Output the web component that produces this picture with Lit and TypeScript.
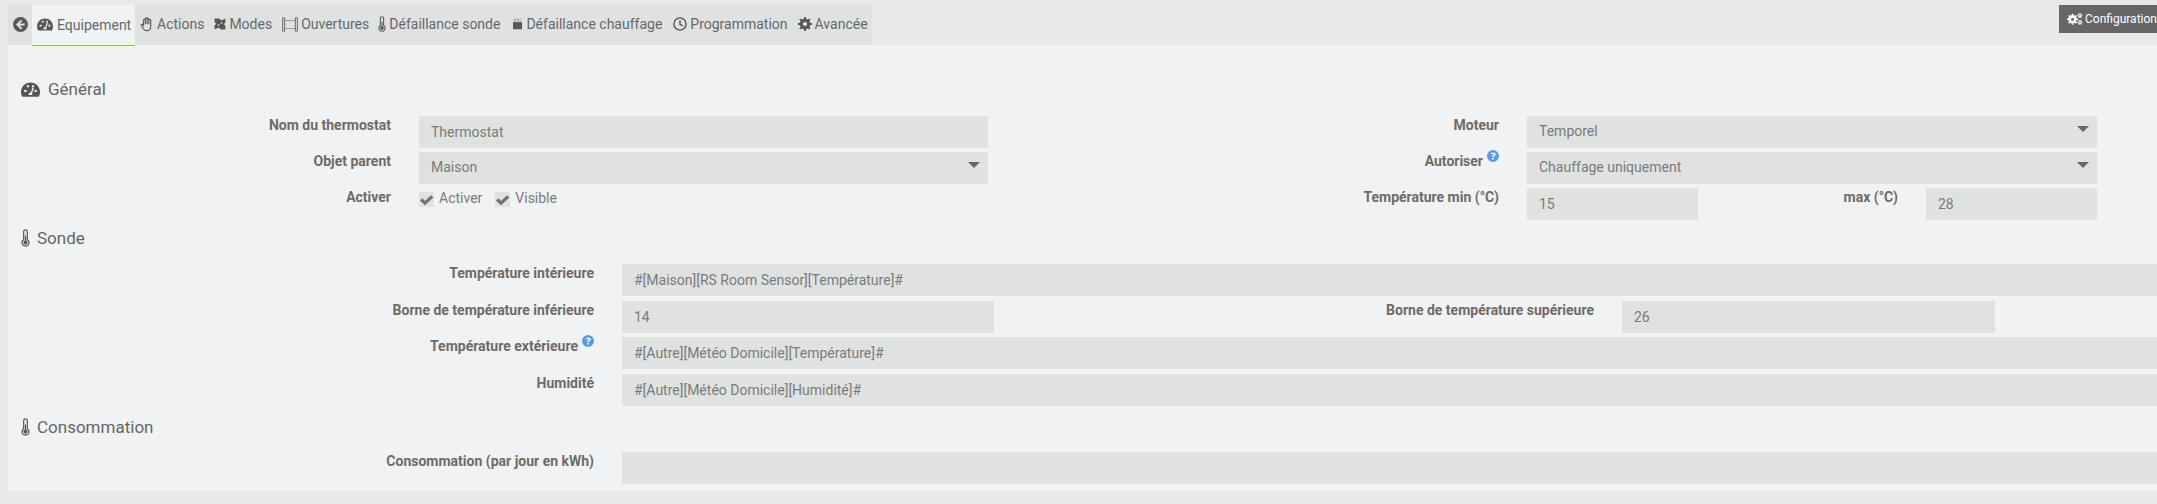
import { LitElement, html, css, svg } from "lit";
import { customElement } from "lit/decorators.js";

const ic = (vb: string, body: unknown, cls = "") =>
  html`<svg class="ic ${cls}" viewBox="${vb}" aria-hidden="true">${body}</svg>`;

/* Builds a toothed wheel with a round hole, as one path. */
function gear(cx: number, cy: number, R: number, r: number, hole: number, n = 8): string {
  const pt = (rad: number, a: number) =>
    `${(cx + rad * Math.cos(a)).toFixed(2)} ${(cy + rad * Math.sin(a)).toFixed(2)}`;
  const step = (Math.PI * 2) / n;
  let d = "";
  for (let i = 0; i < n; i++) {
    const a = i * step;
    d += `${i ? "L" : "M"}${pt(r, a - step * 0.3)}L${pt(R, a - step * 0.17)}L${pt(R, a + step * 0.17)}L${pt(r, a + step * 0.3)}`;
  }
  d += `ZM${cx - hole} ${cy}a${hole} ${hole} 0 1 0 ${hole * 2} 0a${hole} ${hole} 0 1 0 ${-hole * 2} 0Z`;
  return d;
}

const gauge = () =>
  ic("0 0 24 18", svg`<path fill-rule="evenodd" d="M12 0C5.400 0 0 5.300 0 12c0 2.300.6 4.300 1.700 6h20.600c1.100-1.700 1.700-3.700 1.700-6 0-6.700-5.400-12-12-12ZM4 9.500h3v2.500H4ZM7 4.500l2-1.500 1.600 2.200-2 1.500ZM17 4.500l-2-1.500-1.600 2.200 2 1.500ZM17 9.500h3v2.500h-3ZM14.500 6.500l1.800.8-2.400 6.500c.5.700.6 1.400.5 2.200H9.600c-.3-1.800 1.100-3.400 2.900-3.300Z"/>`, "w-gauge");

const thermo = (cls = "") =>
  ic("0 0 10 22", svg`<path fill="none" stroke="currentColor" stroke-width="1.500" d="M2.800 13V3.200a2.200 2.200 0 0 1 4.400 0V13a4.300 4.300 0 1 1-4.400 0Z"/><circle cx="5" cy="16.600" r="2.500"/><rect x="4.300" y="8" width="1.400" height="8"/>`, cls);

const hand = ic("0 0 20 22", svg`<path fill="none" stroke="currentColor" stroke-width="1.600" stroke-linejoin="round" stroke-linecap="round" d="M5 11V4.500a1.300 1.300 0 0 1 2.600 0V10M7.600 9.500V2.600a1.300 1.300 0 0 1 2.600 0V10M10.200 9.500V3.200a1.300 1.300 0 0 1 2.600 0V10M12.800 10V5a1.300 1.300 0 0 1 2.600 0v9c0 3.500-2 6-5 6H9c-2 0-3-1-4-2.500L1.600 12.500c-.8-1.400 1.200-2.700 2.200-1.400L5 13"/>`, "w-hand");

const modes = ic("0 0 20 20", svg`<path fill-rule="evenodd" d="M1 1h8l3 3 7-3v7l-3 2 3 3v6h-8l-3-3-7 3v-7l3-2-3-3ZM12 7l-1 2 2 1 1-3ZM8 13l1-2-2-1-1 3Z"/>`, "w-modes");

const film = ic("0 0 24 22", svg`<g fill="none" stroke="currentColor"><path stroke-width="1.200" opacity=".65" d="M4 5h16M4 17h16"/><path stroke-width="1.300" d="M1 1h3v20H1ZM20 1h3v20h-3Z"/></g>`, "w-film");

const heater = ic("0 0 14 16", svg`<path d="M1 5.500h12V15H1z"/><path opacity=".55" d="M2 1h1v3.500H2zM4 1h1v3.500H4zM6 1h1v3.500H6zM8 1h1v3.500H8zM10 1h1v3.500h-1z"/>`, "w-heat");

const clock = ic("0 0 20 20", svg`<circle cx="10" cy="10" r="8.700" fill="none" stroke="currentColor" stroke-width="2"/><path d="M10 4.500v6l4 2.200" fill="none" stroke="currentColor" stroke-width="2"/>`, "w-clock");

const cog = ic("0 0 20 20", svg`<path fill-rule="evenodd" d="${gear(10, 10, 10, 7.4, 3)}"/>`, "w-cog");

const cogs = ic("0 0 26 19", svg`<path fill-rule="evenodd" d="${gear(9, 10, 9, 6.700, 2.500)}"/><path fill-rule="evenodd" d="${gear(21, 4, 4, 3, 1.300, 6)}"/><path fill-rule="evenodd" d="${gear(21, 15, 4, 3, 1.300, 6)}"/>`, "w-cogs");

const back = ic("0 0 20 20", svg`<path fill-rule="evenodd" d="M10 0a10 10 0 1 0 0 20 10 10 0 0 0 0-20Zm.500 3.500 1.800 1.800L9 8.600h6.500v2.800H9l3.300 3.300-1.800 1.800L4 10Z"/>`, "w-back");

const help = html`<svg class="help" viewBox="0 0 20 20" aria-hidden="true"><path fill-rule="evenodd" d="M10 0a10 10 0 1 0 0 20 10 10 0 0 0 0-20Zm1.600 15.800H8.400v-2.600h3.200ZM14 9c-.5.800-1.200 1.200-1.800 1.600-.5.300-.7.500-.7 1.400H8.600c0-2 .8-2.700 1.600-3.200.6-.4 1.100-.6 1.100-1.200 0-.6-.6-1-1.300-1-.8 0-1.300.5-1.700 1.100L6.200 6.300C7 5 8.300 4 10.200 4c2.500 0 4.500 1.500 4.500 3.500 0 .6-.3 1-.7 1.500Z"/></svg>`;

const check = html`<span class="box"><svg viewBox="0 0 15 15" aria-hidden="true"><path d="M1 8.500 3.300 6.300 6 9l6-5.700L14.300 5.600 6 13.300Z"/></svg></span>`;

@customElement("app-root")
export class AppRoot extends LitElement {
  static styles = css`
    :host { display: block; width: 2157px; height: 504px; overflow: hidden; background: #e7e8ea; font-family: Roboto, "Liberation Sans", sans-serif; font-size: 14px; color: #6f6f6f; }
    .top { display: flex; justify-content: space-between; align-items: flex-start; padding: 5px 0 0 8px; height: 45px; box-sizing: border-box; position: relative; z-index: 1; }
    .tabs { display: flex; height: 40px; background: #e0e2e1; width: 864px; }
    .tab { display: flex; align-items: center; height: 40px; box-sizing: border-box; padding-bottom: 2px; white-space: nowrap; gap: 3px; color: #66676b; }
    .tab .ic { color: #57575a; }
    .back { width: 24px; justify-content: center; }
    .active { background: #f0f2f4; width: 103px; padding: 0 0 1px 5px; gap: 4px; height: 41px; border-bottom: 1px solid #94c13c; }
    .ic { height: 14px; width: 16px; flex: none; fill: currentColor; }
    .w-gauge { width: 16px; height: 13px; }
    .w-back { width: 15px; height: 15px; }
    .w-hand { width: 14px; height: 15px; }
    .w-modes { width: 12px; height: 12px; }
    .w-film { width: 16px; height: 15px; }
    .w-heat { width: 11px; height: 12px; }
    .w-clock { width: 14px; height: 14px; }
    .w-cog { width: 14px; height: 14px; }
    .w-cogs { width: 16px; height: 12px; }
    .narrow { width: 8px; height: 16px; }
    .t1 { margin-left: 5px; }
    .t2 { margin-left: 10px; }
    .t3 { margin-left: 10px; }
    .t4 { margin-left: 9px; }
    .t5 { margin-left: 12px; }
    .t6 { margin-left: 11px; }
    .t7 { margin-left: 10px; }
    .config { display: flex; align-items: center; gap: 2px; width: 98px; height: 28px; padding-left: 8px; box-sizing: border-box; background: #666; color: #fff; font-size: 12px; white-space: nowrap; }
    .panel { margin-left: 8px; height: 446px; background: #f0f2f4; box-sizing: border-box; padding-top: 32px; }
    .h { display: flex; align-items: center; gap: 8px; height: 24px; font-size: 17px; color: #666; padding-left: 13px; }
    .h .ic { color: #555; width: 19px; height: 15px; }
    .h .narrow { width: 9px; height: 18px; margin-right: -1px; }
    .general { display: grid; grid-template-columns: 383px 569px 483px 570px; column-gap: 28px; row-gap: 4px; margin-top: 15px; }
    .lab { font-weight: 700; text-align: right; color: #6f6a66; line-height: 18px; white-space: nowrap; }
    .f { height: 32px; background: #e0e2e1; box-sizing: border-box; padding: 0 12px; color: #7a7a7a; display: flex; align-items: center; justify-content: space-between; white-space: nowrap; }
    .f.s { padding: 0 8px 2px 12px; }
    .tri { width: 0; height: 0; border-left: 6px solid transparent; border-right: 6px solid transparent; border-top: 6px solid #666; margin-bottom: 5px; }
    .checks { display: flex; align-items: flex-start; gap: 5px; height: 32px; color: #7a7a7a; padding-top: 4px; box-sizing: border-box; line-height: 13px; }
    .box { width: 15px; height: 15px; background: #e0e2e1; display: block; flex: none; }
    .box svg { display: block; width: 15px; height: 15px; fill: #6f6f78; }
    .v { margin-right: 8px; }
    .pair { display: grid; grid-template-columns: 171px 1fr 171px; column-gap: 28px; }
    .help { width: 12px; height: 12px; fill: #5b9be6; vertical-align: top; margin-left: 4px; transform: translateY(-2px); }
    .stack { display: flex; flex-direction: column; gap: 4.670px; margin-top: 14px; }
    .row { display: grid; grid-template-columns: 586px 1fr; column-gap: 28px; }
    .row2 { display: grid; grid-template-columns: 586px 372px 572px 373px; column-gap: 28px; }
    .sonde { margin-top: 6px; }
    .conso { margin-top: 9px; }
    .conso-stack { margin-top: 13px; }
  `;

  render() {
    return html`
      <div class="top">
        <div class="tabs">
          <div class="tab back">${back}</div>
          <div class="tab active">${gauge()}<span>Equipement</span></div>
          <div class="tab t1">${hand}<span>Actions</span></div>
          <div class="tab t2">${modes}<span>Modes</span></div>
          <div class="tab t3">${film}<span>Ouvertures</span></div>
          <div class="tab t4">${thermo("narrow")}<span>Défaillance sonde</span></div>
          <div class="tab t5">${heater}<span>Défaillance chauffage</span></div>
          <div class="tab t6">${clock}<span>Programmation</span></div>
          <div class="tab t7">${cog}<span>Avancée</span></div>
        </div>
        <div class="config">${cogs}<span>Configuration</span></div>
      </div>
      <div class="panel">
        <div class="h">${gauge()}<span>Général</span></div>
        <div class="general">
          <div class="lab">Nom du thermostat</div>
          <div class="f">Thermostat</div>
          <div class="lab">Moteur</div>
          <div class="f s"><span>Temporel</span><i class="tri"></i></div>

          <div class="lab">Objet parent</div>
          <div class="f s"><span>Maison</span><i class="tri"></i></div>
          <div class="lab">Autoriser${help}</div>
          <div class="f s"><span>Chauffage uniquement</span><i class="tri"></i></div>

          <div class="lab">Activer</div>
          <div class="checks">${check}<span class="v">Activer</span>${check}<span>Visible</span></div>
          <div class="lab">Température min (°C)</div>
          <div class="pair">
            <div class="f">15</div>
            <div class="lab">max (°C)</div>
            <div class="f">28</div>
          </div>
        </div>

        <div class="h sonde">${thermo("narrow")}<span>Sonde</span></div>
        <div class="stack">
          <div class="row"><div class="lab">Température intérieure</div><div class="f">#[Maison][RS Room Sensor][Température]#</div></div>
          <div class="row2"><div class="lab">Borne de température inférieure</div><div class="f">14</div><div class="lab">Borne de température supérieure</div><div class="f">26</div></div>
          <div class="row"><div class="lab">Température extérieure${help}</div><div class="f">#[Autre][Météo Domicile][Température]#</div></div>
          <div class="row"><div class="lab">Humidité</div><div class="f">#[Autre][Météo Domicile][Humidité]#</div></div>
        </div>

        <div class="h conso">${thermo("narrow")}<span>Consommation</span></div>
        <div class="stack conso-stack">
          <div class="row"><div class="lab">Consommation (par jour en kWh)</div><div class="f"></div></div>
        </div>
      </div>
    `;
  }
}
